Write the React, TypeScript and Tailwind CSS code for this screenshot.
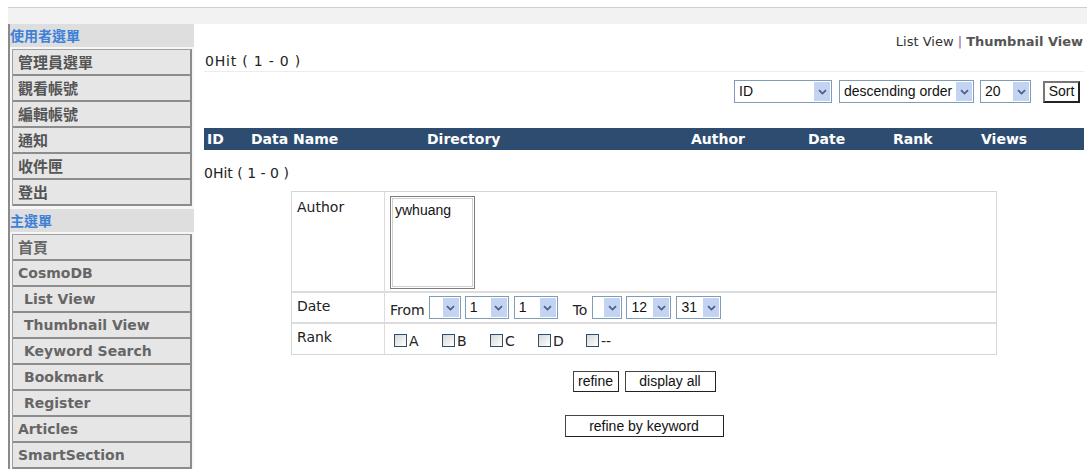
import React from "react";

const verdana = "font-['DejaVu_Sans','Verdana',sans-serif]";
const arial = "font-['Liberation_Sans','Arial',sans-serif]";
const cjk = "font-['Noto_Sans_CJK_TC','Noto_Sans_CJK_SC',sans-serif]";

function Chevron() {
  return (
    <svg width="9" height="6" viewBox="0 0 9 6" fill="none">
      <path d="M1 1.2 L4.5 4.6 L8 1.2" stroke="#4d5f86" strokeWidth="1.8" />
    </svg>
  );
}

function Select({ value, className }: { value: string; className: string }) {
  return (
    <div className={`flex h-[23px] items-stretch border border-[#7f9db9] bg-white ${className}`}>
      <span className={`flex-1 truncate pl-[4px] text-[14px] leading-[21px] text-[#111] ${arial}`}>{value}</span>
      <span className="m-[1px] flex w-[16px] items-center justify-center bg-[#c3d4f3]">
        <Chevron />
      </span>
    </div>
  );
}

function Check({ label }: { label: string }) {
  return (
    <div className="flex w-[48px] items-center">
      <span className="h-[13px] w-[13px] border border-[#2d4f72] bg-linear-to-br from-[#d8d8d2] to-white" />
      <span className={`ml-[2px] text-[14px] leading-[14px] text-[#222] ${verdana}`}>{label}</span>
    </div>
  );
}

function Btn({ label, className }: { label: string; className: string }) {
  return (
    <div
      className={`flex items-center justify-center border border-[#444] border-r-[#222] border-b-[#222] bg-white text-[14px] text-[#111] ${arial} ${className}`}
    >
      {label}
    </div>
  );
}

const userMenu = ["管理員選單", "觀看帳號", "編輯帳號", "通知", "收件匣", "登出"];
const mainMenu: { label: string; sub?: boolean; cjk?: boolean }[] = [
  { label: "首頁", cjk: true },
  { label: "CosmoDB" },
  { label: "List View", sub: true },
  { label: "Thumbnail View", sub: true },
  { label: "Keyword Search", sub: true },
  { label: "Bookmark", sub: true },
  { label: "Register", sub: true },
  { label: "Articles" },
  { label: "SmartSection" },
];

function MenuHeader({ label }: { label: string }) {
  return (
    <div className={`flex h-[23px] items-center bg-[#dedede] text-[14px] font-bold text-[#3d82d8] ${cjk}`}>
      {label}
    </div>
  );
}

function Sidebar() {
  return (
    <div className="flex w-[186px] shrink-0 flex-col border-l-2 border-[#8a8a8a] bg-[#f6f6f6]">
      <MenuHeader label="使用者選單" />
      <div className="mx-[2px] mt-[2px] border-t border-l border-r-2 border-[#8c8c8c] border-t-[#a0a0a0] border-l-[#a0a0a0]">
        {userMenu.map((m) => (
          <div
            key={m}
            className={`flex h-[26px] items-center border-b-2 border-[#8c8c8c] bg-[#e6e6e6] pl-[5px] text-[15px] font-bold text-[#555] ${cjk}`}
          >
            {m}
          </div>
        ))}
      </div>
      <div className="mt-[3px]">
        <MenuHeader label="主選單" />
      </div>
      <div className="mx-[2px] mt-[2px] border-t border-l border-r-2 border-[#8c8c8c] border-t-[#a0a0a0] border-l-[#a0a0a0]">
        {mainMenu.map((m) => (
          <div
            key={m.label}
            className={`flex h-[26px] items-center border-b-2 border-[#8c8c8c] bg-[#e6e6e6] font-bold text-[#666] ${
              m.cjk ? `pl-[5px] text-[15px] text-[#555] ${cjk}` : `text-[14px] ${verdana} ${m.sub ? "pl-[11px]" : "pl-[5px]"}`
            }`}
          >
            {m.label}
          </div>
        ))}
      </div>
    </div>
  );
}

const columns = [
  { label: "ID", w: "w-[44px]" },
  { label: "Data Name", w: "w-[176px]" },
  { label: "Directory", w: "w-[264px]" },
  { label: "Author", w: "w-[117px]" },
  { label: "Date", w: "w-[85px]" },
  { label: "Rank", w: "w-[88px]" },
  { label: "Views", w: "flex-1" },
];

function Main() {
  return (
    <div className={`flex min-w-0 flex-1 flex-col pl-[10px] pr-[3px] text-[#222] ${verdana}`}>
      {/* view switch */}
      <div className="mt-[11px] h-[14px] pr-[1px] text-right text-[13px] leading-[14px]">
        <span className="text-[#333]">List View</span>
        <span className="text-[#8b5f8f]"> | </span>
        <span className="font-bold text-[#555]">Thumbnail View</span>
      </div>
      {/* hit count */}
      <div className="mt-[5px] border-b border-[#ececec] pb-[3px] pl-[1px] text-[14px] leading-[14px] tracking-[0.8px] text-[#222]">
        0Hit ( 1 - 0 )
      </div>
      {/* sort controls */}
      <div className="mt-[8px] flex items-center justify-end gap-[6px] pr-[4px]">
        <Select value="ID" className="w-[98px]" />
        <Select value="descending order" className="ml-[1px] w-[135px]" />
        <Select value="20" className="w-[51px]" />
        <Btn label="Sort" className="ml-[6px] h-[22px] w-[37px] border-2 border-t-[#777] border-l-[#777]" />
      </div>
      {/* list header */}
      <div className="mt-[25px] flex h-[22px] items-center bg-[#2e4c6f] pl-[3px] text-[14px] font-bold text-white">
        {columns.map((c) => (
          <div key={c.label} className={c.w}>
            {c.label}
          </div>
        ))}
      </div>
      <div className="mt-[16px] h-[14px] text-[14px] leading-[14px] text-[#222]">0Hit ( 1 - 0 )</div>
      {/* refine form */}
      <div className="mx-auto mt-[11px] w-[706px] border border-[#d6d6d6] text-[14px] text-[#222]">
        <div className="flex h-[101px] border-b-2 border-[#dcdcdc]">
          <div className="w-[93px] border-r border-[#dcdcdc] pl-[5px] pt-[5px]">Author</div>
          <div className="pl-[5px] pt-[4px]">
            <div className="h-[93px] w-[85px] border border-[#7d7d7d] bg-white p-[1px]">
              <div className={`h-full w-full border border-[#d4d0c8] px-[2px] pt-[3px] text-[14px] leading-[16px] text-[#111] ${arial}`}>
                ywhuang
              </div>
            </div>
          </div>
        </div>
        <div className="flex h-[31px] border-b-2 border-[#dcdcdc]">
          <div className="w-[93px] border-r border-[#dcdcdc] pl-[5px] pt-[3px]">Date</div>
          <div className="flex items-center pl-[5px]">
            <span className="mr-[4px] mt-[6px]">From</span>
            <Select value="" className="w-[32px]" />
            <Select value="1" className="ml-[4px] w-[44px]" />
            <Select value="1" className="ml-[5px] w-[44px]" />
            <span className="ml-[15px] mr-[5px] mt-[6px]">To</span>
            <Select value="" className="w-[30px]" />
            <Select value="12" className="ml-[4px] w-[45px]" />
            <Select value="31" className="ml-[5px] w-[45px]" />
          </div>
        </div>
        <div className="flex h-[30px]">
          <div className="w-[93px] border-r border-[#dcdcdc] pl-[5px] pt-[3px]">Rank</div>
          <div className="flex items-center pl-[9px] pt-[3px]">
            <Check label="A" />
            <Check label="B" />
            <Check label="C" />
            <Check label="D" />
            <Check label="--" />
          </div>
        </div>
      </div>
      <div className="mt-[16px] flex justify-center gap-[6px]">
        <Btn label="refine" className="h-[21px] w-[46px]" />
        <Btn label="display all" className="h-[21px] w-[91px]" />
      </div>
      <div className="mt-[23px] flex justify-center">
        <Btn label="refine by keyword" className="h-[22px] w-[159px]" />
      </div>
    </div>
  );
}

export default function App() {
  return (
    <div className="h-[469px] w-[1087px] overflow-hidden bg-white">
      <div className="ml-[8px] mt-[7px] flex h-[462px] flex-col border-t border-[#cfcfcf]">
        <div className="h-[16px] bg-[#f2f2f2]" />
        <div className="flex flex-1">
          <Sidebar />
          <Main />
        </div>
      </div>
    </div>
  );
}
